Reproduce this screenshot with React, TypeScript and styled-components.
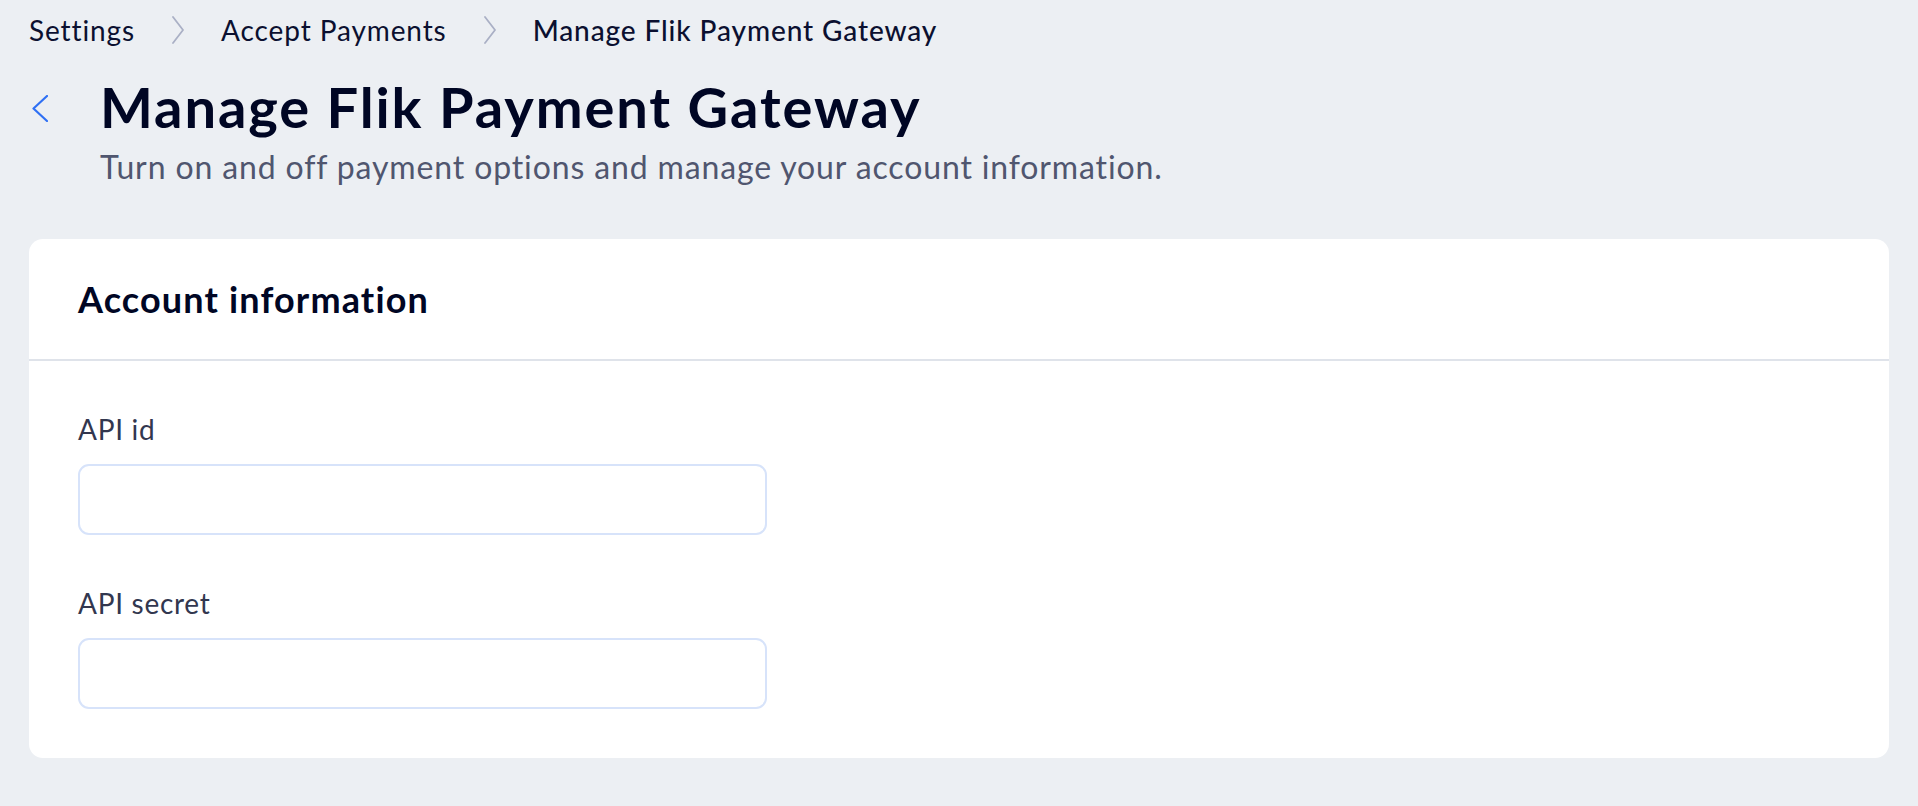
import React from "react";
import styled, { createGlobalStyle } from "styled-components";

const GlobalStyle = createGlobalStyle`
  html, body {
    margin: 0;
    padding: 0;
    background: #eceff3;
  }
  body {
    font-family: Lato, "Liberation Sans", Arial, sans-serif;
    -webkit-font-smoothing: antialiased;
  }
  * { box-sizing: border-box; }
`;

const Page = styled.div`
  padding: 9px 29px 0 29px;
  min-height: 806px;
  display: flex;
  flex-direction: column;
`;

const Breadcrumbs = styled.nav`
  display: flex;
  align-items: center;
  height: 42px;
`;

const Crumb = styled.span<{ $current?: boolean }>`
  font-size: 28px;
  line-height: 42px;
  letter-spacing: 0.032em;
  color: #0b1030;
  font-weight: ${(p) => (p.$current ? 500 : 400)};
  white-space: nowrap;
`;

const CrumbSep = styled.svg`
  width: 12px;
  height: 28px;
  margin: 0 37px;
  flex: none;
`;

const Header = styled.header`
  display: flex;
  align-items: flex-start;
  margin-top: 21px;
`;

const BackButton = styled.button`
  display: flex;
  align-items: center;
  justify-content: flex-start;
  width: 71px;
  height: 70px;
  padding: 3px 0 0 3px;
  margin: 0;
  border: 0;
  background: transparent;
  cursor: pointer;
  flex: none;
`;

const HeaderText = styled.div`
  display: flex;
  flex-direction: column;
`;

const Title = styled.h1`
  margin: 0;
  font-size: 56px;
  line-height: 70px;
  letter-spacing: 0.034em;
  font-weight: 700;
  color: #000624;
`;

const Subtitle = styled.p`
  margin: 4px 0 0 0;
  font-size: 32px;
  line-height: 42px;
  letter-spacing: 0.027em;
  font-weight: 400;
  color: #50566f;
`;

const Card = styled.section`
  margin-top: 51px;
  background: #ffffff;
  border-radius: 14px;
  display: flex;
  flex-direction: column;
`;

const CardHeader = styled.div`
  height: 122px;
  display: flex;
  align-items: center;
  padding: 0 49px;
  border-bottom: 2px solid #dfe3ea;
`;

const CardTitle = styled.h2`
  margin: 0;
  font-size: 36px;
  line-height: 42px;
  letter-spacing: 0.032em;
  font-weight: 700;
  color: #000624;
`;

const CardBody = styled.div`
  padding: 47px 49px 49px 49px;
  display: flex;
  flex-direction: column;
  gap: 47px;
`;

const Field = styled.label`
  display: flex;
  flex-direction: column;
  gap: 14px;
`;

const FieldLabel = styled.span`
  font-size: 28px;
  line-height: 42px;
  letter-spacing: 0.025em;
  color: #32374f;
`;

const TextInput = styled.input`
  width: 689px;
  height: 71px;
  border: 2px solid #d7e3fa;
  border-radius: 11px;
  background: #ffffff;
  padding: 0 22px;
  font-family: inherit;
  font-size: 28px;
  color: #000624;
  outline: none;
`;

const Chevron = () => (
  <CrumbSep viewBox="0 0 12 28" fill="none">
    <path d="M1 1 L11 14 L1 27" stroke="#aab0c5" strokeWidth="1.8" strokeLinecap="round" strokeLinejoin="round" />
  </CrumbSep>
);

export default function App() {
  return (
    <>
      <GlobalStyle />
      <Page>
        <Breadcrumbs>
          <Crumb>Settings</Crumb>
          <Chevron />
          <Crumb>Accept Payments</Crumb>
          <Chevron />
          <Crumb $current>Manage Flik Payment Gateway</Crumb>
        </Breadcrumbs>
        <Header>
          <BackButton aria-label="Back">
            <svg width="16" height="27" viewBox="0 0 16 27" fill="none">
              <path d="M15 1 L1.5 13.5 L15 26" stroke="#2f70f4" strokeWidth="2.2" strokeLinecap="round" strokeLinejoin="round" />
            </svg>
          </BackButton>
          <HeaderText>
            <Title>Manage Flik Payment Gateway</Title>
            <Subtitle>Turn on and off payment options and manage your account information.</Subtitle>
          </HeaderText>
        </Header>
        <Card>
          <CardHeader>
            <CardTitle>Account information</CardTitle>
          </CardHeader>
          <CardBody>
            <Field>
              <FieldLabel>API id</FieldLabel>
              <TextInput type="text" />
            </Field>
            <Field>
              <FieldLabel>API secret</FieldLabel>
              <TextInput type="text" />
            </Field>
          </CardBody>
        </Card>
      </Page>
    </>
  );
}
